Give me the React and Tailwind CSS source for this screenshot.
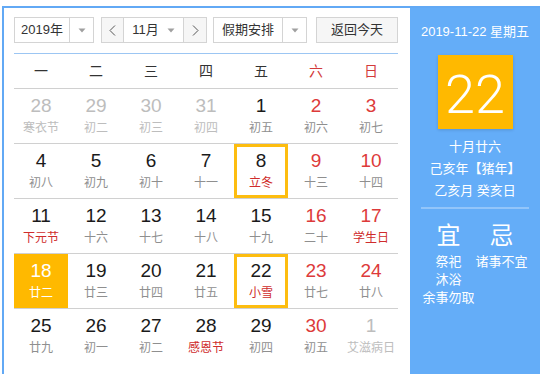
import React from "react";

const rows = [
  [
    { n: "28", l: "寒衣节", t: "other" },
    { n: "29", l: "初二", t: "other" },
    { n: "30", l: "初三", t: "other" },
    { n: "31", l: "初四", t: "other" },
    { n: "1", l: "初五" },
    { n: "2", l: "初六", r: true },
    { n: "3", l: "初七", r: true },
  ],
  [
    { n: "4", l: "初八" },
    { n: "5", l: "初九" },
    { n: "6", l: "初十" },
    { n: "7", l: "十一" },
    { n: "8", l: "立冬", lr: true, box: true },
    { n: "9", l: "十三", r: true },
    { n: "10", l: "十四", r: true },
  ],
  [
    { n: "11", l: "下元节", lr: true },
    { n: "12", l: "十六" },
    { n: "13", l: "十七" },
    { n: "14", l: "十八" },
    { n: "15", l: "十九" },
    { n: "16", l: "二十", r: true },
    { n: "17", l: "学生日", r: true, lr: true },
  ],
  [
    { n: "18", l: "廿二", fill: true },
    { n: "19", l: "廿三" },
    { n: "20", l: "廿四" },
    { n: "21", l: "廿五" },
    { n: "22", l: "小雪", lr: true, box: true },
    { n: "23", l: "廿七", r: true },
    { n: "24", l: "廿八", r: true },
  ],
  [
    { n: "25", l: "廿九" },
    { n: "26", l: "初一" },
    { n: "27", l: "初二" },
    { n: "28", l: "感恩节", lr: true },
    { n: "29", l: "初四" },
    { n: "30", l: "初五", r: true },
    { n: "1", l: "艾滋病日", t: "other" },
  ],
];

const Arrow = () => (
  <svg width="8" height="5" viewBox="0 0 8 5">
    <path d="M0.5 0.5 L7.5 0.5 L4 4.5 Z" fill="#a0a0a0" />
  </svg>
);

function Cell({ c }) {
  let numColor = "text-[#1a1a1a]";
  let lunColor = "text-[#8f8f8f]";
  if (c.t === "other") {
    numColor = "text-[#bdbdbd]";
    lunColor = "text-[#bdbdbd]";
  }
  if (c.r) numColor = "text-[#dd3a3a]";
  if (c.lr) lunColor = "text-[#cf2c2c]";
  let wrap = "pt-[6px]";
  if (c.fill) {
    wrap = "pt-[6px] bg-[#ffb900]";
    numColor = "text-white";
    lunColor = "text-white";
  }
  if (c.box) wrap = "border-[3px] border-[#fdbd10] pt-[3px]";
  return (
    <div className={`h-[54px] flex flex-col items-center ${wrap}`}>
      <div className={`text-[19px] leading-[22px] ${numColor}`}>{c.n}</div>
      <div className={`text-[12px] leading-4 mt-[3px] ${lunColor}`}>{c.l}</div>
    </div>
  );
}

export default function App() {
  const font = { fontFamily: '"Liberation Sans", Arial, "Noto Sans CJK SC", sans-serif' };
  return (
    <div className="w-[540px] h-[374px] bg-white overflow-hidden" style={font}>
      <div className="ml-[2px] mt-[6px] flex border-l-2 border-t-2 border-[#62a9f5] h-[370px]">
        {/* main */}
        <div className="w-[406px] pl-[10px] pr-[12px] pt-[9px] bg-white">
          {/* toolbar */}
          <div className="flex items-center h-[26px] text-[13px] text-[#333]">
            <div className="flex h-[26px] w-[80px] border border-[#d4d4d4]">
              <div className="w-[55px] flex items-center justify-center border-r border-[#d4d4d4]">2019年</div>
              <div className="flex-1 flex items-center justify-center"><Arrow /></div>
            </div>
            <div className="flex h-[26px] w-[106px] ml-[7px] border border-[#d4d4d4]">
              <div className="w-[22px] flex items-center justify-center bg-[#f6f6f6] border-r border-[#d4d4d4] text-[#666]">
                <svg width="7" height="11" viewBox="0 0 7 11"><path d="M6 0.5 L1 5.5 L6 10.5" fill="none" stroke="#555" strokeWidth="1" /></svg>
              </div>
              <div className="flex-1 flex items-center justify-center gap-[8px] border-r border-[#d4d4d4]">
                <span>11月</span>
                <Arrow />
              </div>
              <div className="w-[22px] flex items-center justify-center bg-[#f6f6f6]">
                <svg width="7" height="11" viewBox="0 0 7 11"><path d="M1 0.5 L6 5.5 L1 10.5" fill="none" stroke="#555" strokeWidth="1" /></svg>
              </div>
            </div>
            <div className="flex h-[26px] w-[94px] ml-[6px] border border-[#d4d4d4]">
              <div className="w-[69px] flex items-center justify-center border-r border-[#d4d4d4]">假期安排</div>
              <div className="flex-1 flex items-center justify-center"><Arrow /></div>
            </div>
            <div className="h-[26px] w-[82px] ml-[9px] border border-[#d4d4d4] bg-[#f6f6f6] flex items-center justify-center">
              返回今天
            </div>
          </div>
          <div className="mt-[10px] h-px bg-[#9cc6f3]" />
          {/* header */}
          <div className="grid grid-cols-[repeat(7,54px)] gap-x-px h-[35px] items-center border-b border-[#d0d0d0] text-[14px]">
            {["一", "二", "三", "四", "五", "六", "日"].map((d, i) => (
              <div key={i} className={`text-center ${i >= 5 ? "text-[#d33a3a]" : "text-[#333]"}`}>{d}</div>
            ))}
          </div>
          {rows.map((r, ri) => (
            <div
              key={ri}
              className={`grid grid-cols-[repeat(7,54px)] gap-x-px ${ri < 4 ? "border-b border-[#d0d0d0]" : ""}`}
            >
              {r.map((c, ci) => (
                <Cell key={ci} c={c} />
              ))}
            </div>
          ))}
        </div>
        {/* right panel */}
        <div className="flex-1 bg-[#64adf8] text-white flex flex-col items-center">
          <div className="mt-[16px] text-[13px] leading-4">2019-11-22 星期五</div>
          <div
            className="mt-[15px] w-[75px] h-[74px] bg-[#ffb900] flex items-center justify-center shadow-[0_1px_3px_rgba(0,0,0,0.15)]"
          >
            <span className="text-[54px] leading-none font-light mt-[6px]" style={{ fontFamily: "Roboto, sans-serif" }}>22</span>
          </div>
          <div className="mt-[7px] text-[13px] leading-[22px] text-center">
            <div>十月廿六</div>
            <div>己亥年【猪年】</div>
            <div>乙亥月 癸亥日</div>
          </div>
          <div className="mt-[5px] w-[108px] h-[2px] bg-white/30" />
          <div className="mt-[14px] w-full px-[12px] grid grid-cols-2">
            <div className="flex flex-col items-center">
              <div className="text-[24px] leading-[26px]">宜</div>
              <div className="mt-[4px] text-[13px] leading-[18px] text-center">
                <div>祭祀</div>
                <div>沐浴</div>
                <div>余事勿取</div>
              </div>
            </div>
            <div className="flex flex-col items-center">
              <div className="text-[24px] leading-[26px]">忌</div>
              <div className="mt-[4px] text-[13px] leading-[18px] text-center">
                <div>诸事不宜</div>
              </div>
            </div>
          </div>
        </div>
      </div>
    </div>
  );
}
